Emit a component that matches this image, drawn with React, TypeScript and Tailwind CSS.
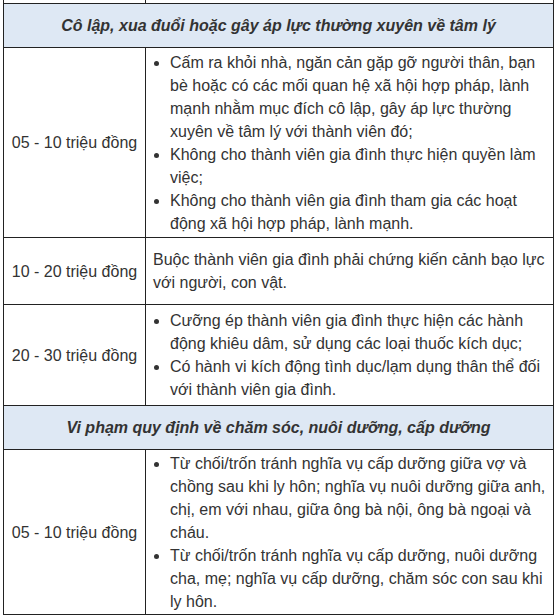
import React from "react";

type Row =
  | { kind: "head"; title: string }
  | { kind: "body"; fine: string; h: string; items?: string[]; text?: string };

const rows: Row[] = [
  { kind: "head", title: "Cô lập, xua đuổi hoặc gây áp lực thường xuyên về tâm lý" },
  {
    kind: "body",
    fine: "05 - 10 triệu đồng",
    h: "h-[190px]",
    items: [
      "Cấm ra khỏi nhà, ngăn cản gặp gỡ người thân, bạn bè hoặc có các mối quan hệ xã hội hợp pháp, lành mạnh nhằm mục đích cô lập, gây áp lực thường xuyên về tâm lý với thành viên đó;",
      "Không cho thành viên gia đình thực hiện quyền làm việc;",
      "Không cho thành viên gia đình tham gia các hoạt động xã hội hợp pháp, lành mạnh.",
    ],
  },
  {
    kind: "body",
    fine: "10 - 20 triệu đồng",
    h: "h-[66px]",
    text: "Buộc thành viên gia đình phải chứng kiến cảnh bạo lực với người, con vật.",
  },
  {
    kind: "body",
    fine: "20 - 30 triệu đồng",
    h: "h-[101px]",
    items: [
      "Cưỡng ép thành viên gia đình thực hiện các hành động khiêu dâm, sử dụng các loại thuốc kích dục;",
      "Có hành vi kích động tình dục/lạm dụng thân thể đối với thành viên gia đình.",
    ],
  },
  { kind: "head", title: "Vi phạm quy định về chăm sóc, nuôi dưỡng, cấp dưỡng" },
  {
    kind: "body",
    fine: "05 - 10 triệu đồng",
    h: "h-[165px]",
    items: [
      "Từ chối/trốn tránh nghĩa vụ cấp dưỡng giữa vợ và chồng sau khi ly hôn; nghĩa vụ nuôi dưỡng giữa anh, chị, em với nhau, giữa ông bà nội, ông bà ngoại và cháu.",
      "Từ chối/trốn tránh nghĩa vụ cấp dưỡng, nuôi dưỡng cha, mẹ; nghĩa vụ cấp dưỡng, chăm sóc con sau khi ly hôn.",
    ],
  },
];

export default function App() {
  return (
    <div className="h-[615px] w-[554px] overflow-hidden bg-white">
      <table
        className="ml-[3px] mt-[-7px] w-[551px] table-fixed border-collapse text-[16px] leading-[23px] text-[#333]"
        style={{ fontFamily: '"Liberation Sans", Arial, sans-serif' }}
      >
        <colgroup>
          <col className="w-[142px]" />
          <col />
        </colgroup>
        <tbody>
          {/* tail of the row above, cut off by the screenshot */}
          <tr>
            <td className="h-[10px] border border-[#222] p-0" />
            <td className="h-[10px] border border-[#222] p-0" />
          </tr>
          {rows.map((row, i) =>
            row.kind === "head" ? (
              <tr key={i}>
                <td
                  colSpan={2}
                  className="h-[44px] border border-[#222] bg-[#dee8f4] px-2 text-center font-bold italic"
                >
                  {row.title}
                </td>
              </tr>
            ) : (
              <tr key={i}>
                <td className={`${row.h} border border-[#222] px-1 text-center align-middle`}>{row.fine}</td>
                <td
                  className={
                    row.items
                      ? "border border-[#222] py-[1px] pl-[8px] pr-[6px] align-middle"
                      : "border border-[#222] py-[10px] pl-[7px] pr-[6px] align-middle"
                  }
                >
                  {row.items ? (
                    <ul className="list-disc pl-[16px]">
                      {row.items.map((it, j) => (
                        <li key={j}>{it}</li>
                      ))}
                    </ul>
                  ) : (
                    <p>{row.text}</p>
                  )}
                </td>
              </tr>
            )
          )}
        </tbody>
      </table>
    </div>
  );
}
